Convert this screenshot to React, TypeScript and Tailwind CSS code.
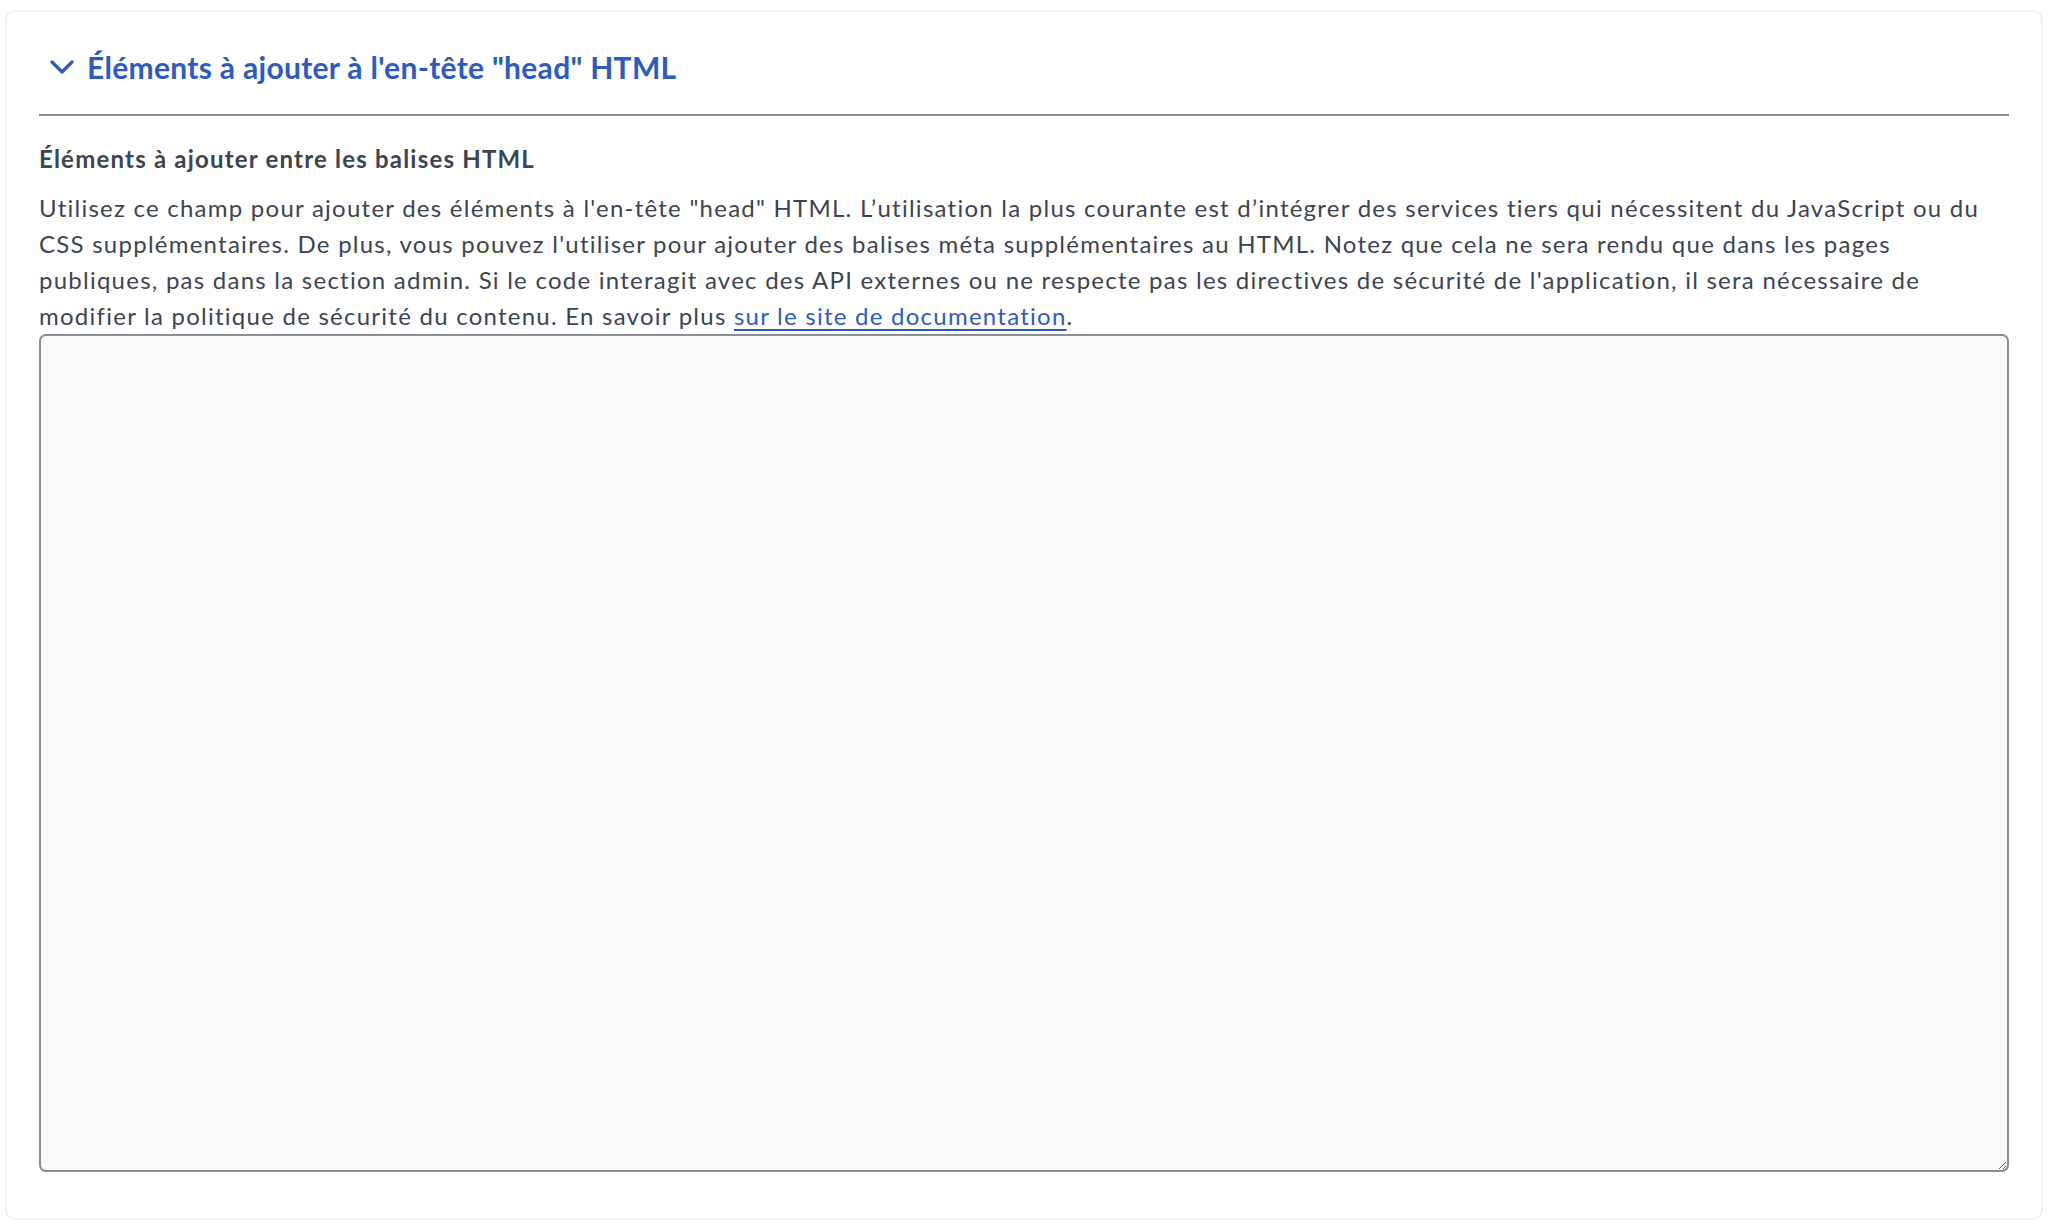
export default function App() {
  return (
    <div className="min-h-screen bg-white pl-[5px] pr-[7px] pt-[10px] pb-[12px] font-['Lato','Liberation_Sans',sans-serif]">
      <section className="rounded-[10px] border-2 border-[#eff0f4] bg-white pl-[32px] pr-[32px] pt-[35px] pb-[46px]">
        <div className="flex items-center h-[40px]">
          <svg
            className="ml-[11px] mr-[13px] shrink-0"
            width="24"
            height="14"
            viewBox="0 0 24 14"
            fill="none"
            stroke="#2d5bbf"
            strokeWidth="3.2"
            strokeLinecap="round"
            strokeLinejoin="round"
          >
            <polyline points="2,2 12,12 22,2" />
          </svg>
          <h2 className="text-[30px] leading-[40px] font-bold text-[#2d5bbf] tracking-[0.01em]">
            Éléments à ajouter à l'en-tête "head" HTML
          </h2>
        </div>
        <hr className="mt-[27px] border-0 h-[2px] bg-[#8b8e97]" />
        <h3 className="mt-[25px] text-[24px] leading-[36px] font-bold text-[#3d4452] tracking-[0.05em]">
          Éléments à ajouter entre les balises HTML
        </h3>
        <p className="mt-[13px] text-[24px] leading-[36px] text-[#3d4452] tracking-[0.052em]">
          Utilisez ce champ pour ajouter des éléments à l'en-tête "head" HTML. L’utilisation la plus courante est d’intégrer des services tiers qui nécessitent du JavaScript ou du CSS supplémentaires. De plus, vous pouvez l'utiliser pour ajouter des balises méta supplémentaires au HTML. Notez que cela ne sera rendu que dans les pages publiques, pas dans la section admin. Si le code interagit avec des API externes ou ne respecte pas les directives de sécurité de l'application, il sera nécessaire de modifier la politique de sécurité du contenu. En savoir plus{" "}
          <a href="#" className="text-[#2c5cc5] underline underline-offset-[4px] decoration-2">
            sur le site de documentation
          </a>
          .
        </p>
        <textarea className="block w-full h-[838px] rounded-[7px] border-2 border-[#8b8e97] bg-[#f9fafc] outline-none" />
      </section>
    </div>
  );
}
